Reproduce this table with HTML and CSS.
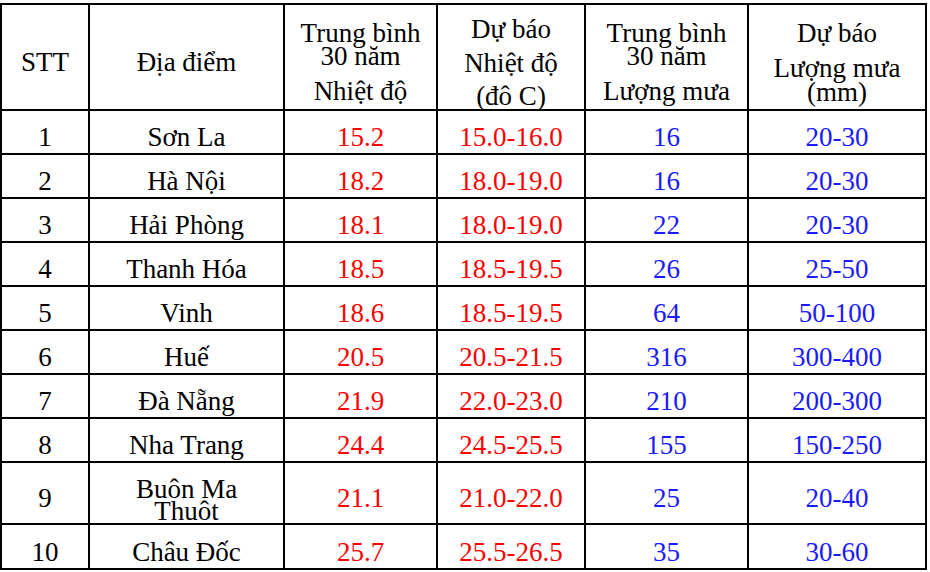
FILE: index.html
```html
<!DOCTYPE html>
<html lang="vi">
<head>
<meta charset="utf-8">
<title>Dự báo nhiệt độ và lượng mưa</title>
<link rel="stylesheet" href="styles.css">
</head>
<body>
<table class="forecast">
  <colgroup>
    <col class="c-stt">
    <col class="c-place">
    <col class="c-tavg">
    <col class="c-tfc">
    <col class="c-ravg">
    <col class="c-rfc">
  </colgroup>
  <thead>
    <tr class="head-row">
      <th><div class="ln">STT</div></th>
      <th><div class="ln">Địa điểm</div></th>
      <th><div class="ln">Trung bình</div><div class="ln m1">30 năm</div><div class="ln m13">Nhiệt độ</div></th>
      <th><div class="ln">Dự báo</div><div class="ln m12">Nhiệt độ</div><div class="ln m11">(đô C)</div></th>
      <th><div class="ln">Trung bình</div><div class="ln m1">30 năm</div><div class="ln m13">Lượng mưa</div></th>
      <th><div class="ln">Dự báo</div><div class="ln m13">Lượng mưa</div><div class="ln m2">(mm)</div></th>
    </tr>
  </thead>
  <tbody>
    <tr class="row"><td>1</td><td>Sơn La</td><td class="red">15.2</td><td class="red">15.0-16.0</td><td class="blue">16</td><td class="blue">20-30</td></tr>
    <tr class="row"><td>2</td><td>Hà Nội</td><td class="red">18.2</td><td class="red">18.0-19.0</td><td class="blue">16</td><td class="blue">20-30</td></tr>
    <tr class="row"><td>3</td><td>Hải Phòng</td><td class="red">18.1</td><td class="red">18.0-19.0</td><td class="blue">22</td><td class="blue">20-30</td></tr>
    <tr class="row"><td>4</td><td>Thanh Hóa</td><td class="red">18.5</td><td class="red">18.5-19.5</td><td class="blue">26</td><td class="blue">25-50</td></tr>
    <tr class="row"><td>5</td><td>Vinh</td><td class="red">18.6</td><td class="red">18.5-19.5</td><td class="blue">64</td><td class="blue">50-100</td></tr>
    <tr class="row"><td>6</td><td>Huế</td><td class="red">20.5</td><td class="red">20.5-21.5</td><td class="blue">316</td><td class="blue">300-400</td></tr>
    <tr class="row"><td>7</td><td>Đà Nẵng</td><td class="red">21.9</td><td class="red">22.0-23.0</td><td class="blue">210</td><td class="blue">200-300</td></tr>
    <tr class="row"><td>8</td><td>Nha Trang</td><td class="red">24.4</td><td class="red">24.5-25.5</td><td class="blue">155</td><td class="blue">150-250</td></tr>
    <tr class="row tall"><td>9</td><td class="two-line"><div class="ln">Buôn Ma</div><div class="ln">Thuôt</div></td><td class="red">21.1</td><td class="red">21.0-22.0</td><td class="blue">25</td><td class="blue">20-40</td></tr>
    <tr class="row last"><td>10</td><td>Châu Đốc</td><td class="red">25.7</td><td class="red">25.5-26.5</td><td class="blue">35</td><td class="blue">30-60</td></tr>
  </tbody>
</table>
</body>
</html>
```

FILE: styles.css
```css
html, body {
  margin: 0;
  padding: 0;
  background: #ffffff;
}

body {
  padding-top: 3px;
}

.forecast {
  border-collapse: collapse;
  table-layout: fixed;
  width: 927px;
  font-family: "Liberation Serif", "Times New Roman", serif;
  font-size: 27px;
  color: #000000;
}

.c-stt { width: 88px; }
.c-place { width: 195px; }
.c-tavg { width: 153px; }
.c-tfc { width: 148px; }
.c-ravg { width: 163px; }
.c-rfc { width: 178px; }

.forecast th,
.forecast td {
  border: 2px solid #000000;
  padding: 10px 0 0 0;
  text-align: center;
  vertical-align: middle;
  font-weight: normal;
  line-height: 22px;
  white-space: nowrap;
  overflow: visible;
}

.forecast td.two-line {
  padding-top: 14px;
}

.ln {
  display: block;
  line-height: 22px;
}

.m1 { margin-top: 1px; }
.m2 { margin-top: 2px; }
.m11 { margin-top: 11px; }
.m12 { margin-top: 12px; }
.m13 { margin-top: 13px; }

.head-row { height: 106px; }
.row { height: 44px; }
.row.tall { height: 62px; }
.row.last { height: 45px; }

.red { color: #ff0000; }
.blue { color: #1a1aff; }
```
